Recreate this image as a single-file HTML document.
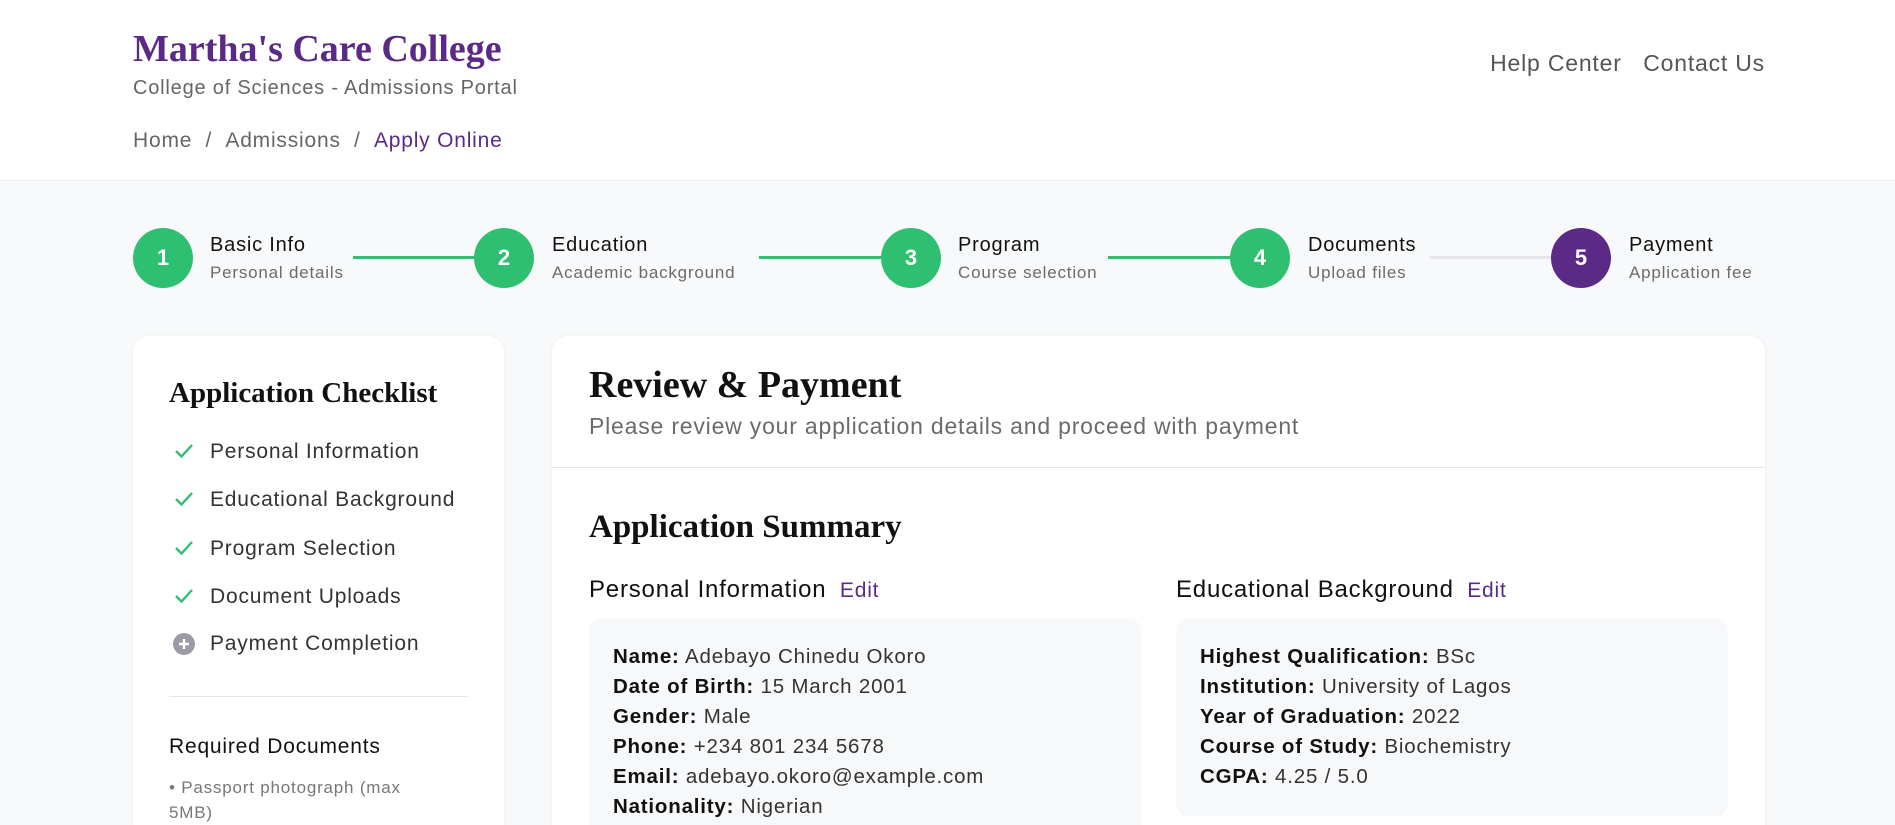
<!DOCTYPE html>
<html style="overflow:hidden;height:825px"><head><meta charset="utf-8"><style>
*{margin:0;padding:0;box-sizing:border-box}
body{width:1895px;height:825px;overflow:hidden;background:#f8f9fa;font-family:"Liberation Sans",sans-serif;color:#1a1a2e;position:relative;letter-spacing:0.05em}
.a{position:absolute;white-space:nowrap}
.serif{font-family:"Liberation Serif","DejaVu Serif",serif;font-weight:bold;letter-spacing:0}
header{position:absolute;left:0;top:0;width:1895px;height:181px;background:#fff;border-bottom:1px solid #ececec}
.circ{position:absolute;top:228px;width:60px;height:60px;border-radius:50%;background:#2fbf71;color:#fff;font-weight:bold;font-size:22px;text-align:center;line-height:60px;letter-spacing:0}
.st{position:absolute;top:234px;font-size:20px;color:#111;white-space:nowrap}
.ss{position:absolute;top:263px;font-size:17px;color:#6b6b6b;white-space:nowrap}
.ln{position:absolute;top:256px;height:3px;background:#2fbf71}
.card{position:absolute;top:336px;background:#fff;border-radius:16px 16px 0 0;box-shadow:0 1px 6px rgba(0,0,0,.05);height:489px}
.ck{position:absolute;left:173px;font-size:21px;color:#333}
.ck svg{position:absolute;left:0;top:0px}
.ck span{position:absolute;left:37px;white-space:nowrap}
.box{position:absolute;top:619px;background:#f7f8fa;border-radius:12px;font-size:20.5px;color:#333;line-height:30px;white-space:nowrap}
.box b{color:#111;font-weight:bold}
</style></head><body>
<header>
<div class="a serif" style="left:133px;top:27px;font-size:38px;color:#5b2a86">Martha's Care College</div>
<div class="a" style="left:133px;top:77px;font-size:20px;color:#666">College of Sciences - Admissions Portal</div>
<div class="a" style="left:133px;top:129px;font-size:21px;color:#666">Home&nbsp; / &nbsp;Admissions&nbsp; / &nbsp;<span style="color:#5b2a86">Apply Online</span></div>
<div class="a" style="right:130px;top:50px;font-size:23px;color:#555">Help Center&nbsp;&nbsp; Contact Us</div>
</header>

<div class="ln" style="left:353px;width:121px"></div>
<div class="ln" style="left:759px;width:122px"></div>
<div class="ln" style="left:1108px;width:122px"></div>
<div class="ln" style="left:1430px;width:121px;background:#e5e5ea"></div>
<div class="circ" style="left:133px">1</div>
<div class="circ" style="left:474px">2</div>
<div class="circ" style="left:881px">3</div>
<div class="circ" style="left:1230px">4</div>
<div class="circ" style="left:1551px;background:#5b2a86">5</div>
<div class="st" style="left:210px">Basic Info</div><div class="ss" style="left:210px">Personal details</div>
<div class="st" style="left:552px">Education</div><div class="ss" style="left:552px">Academic background</div>
<div class="st" style="left:958px">Program</div><div class="ss" style="left:958px">Course selection</div>
<div class="st" style="left:1308px">Documents</div><div class="ss" style="left:1308px">Upload files</div>
<div class="st" style="left:1629px">Payment</div><div class="ss" style="left:1629px">Application fee</div>

<div class="card" style="left:133px;width:371px"></div>
<div class="a serif" style="left:169px;top:377px;font-size:29px;color:#111">Application Checklist</div>
<div class="ck" style="top:440px"><svg width="22" height="22" viewBox="0 0 22 22"><path d="M3 11l5.5 5.5L19 5" stroke="#2fbf71" stroke-width="2.4" fill="none"/></svg><span>Personal Information</span></div>
<div class="ck" style="top:488px"><svg width="22" height="22" viewBox="0 0 22 22"><path d="M3 11l5.5 5.5L19 5" stroke="#2fbf71" stroke-width="2.4" fill="none"/></svg><span>Educational Background</span></div>
<div class="ck" style="top:537px"><svg width="22" height="22" viewBox="0 0 22 22"><path d="M3 11l5.5 5.5L19 5" stroke="#2fbf71" stroke-width="2.4" fill="none"/></svg><span>Program Selection</span></div>
<div class="ck" style="top:585px"><svg width="22" height="22" viewBox="0 0 22 22"><path d="M3 11l5.5 5.5L19 5" stroke="#2fbf71" stroke-width="2.4" fill="none"/></svg><span>Document Uploads</span></div>
<div class="ck" style="top:632px"><svg width="22" height="22" viewBox="0 0 22 22" style="top:1px"><circle cx="11" cy="11" r="11" fill="#9a9aa6"/><path d="M11 6v10M6 11h10" stroke="#fff" stroke-width="2.4"/></svg><span>Payment Completion</span></div>
<div class="a" style="left:169px;top:696px;width:299px;height:1px;background:#e5e5e5"></div>
<div class="a" style="left:169px;top:735px;font-size:21px;color:#111">Required Documents</div>
<div class="a" style="left:169px;top:775px;font-size:17px;color:#777;line-height:25px">• Passport photograph (max<br>5MB)</div>

<div class="card" style="left:552px;width:1213px"></div>
<div class="a serif" style="left:589px;top:363px;font-size:38px;color:#111">Review &amp; Payment</div>
<div class="a" style="left:589px;top:413px;font-size:23px;color:#6b6b6b">Please review your application details and proceed with payment</div>
<div class="a" style="left:552px;top:467px;width:1213px;height:1px;background:#e8e8e8"></div>
<div class="a serif" style="left:589px;top:509px;font-size:33px;color:#111">Application Summary</div>
<div class="a" style="left:589px;top:576px;font-size:24px;color:#111">Personal Information <span style="color:#5b2a86;font-size:21px;margin-left:6px">Edit</span></div>
<div class="a" style="left:1176px;top:576px;font-size:24px;color:#111">Educational Background <span style="color:#5b2a86;font-size:21px;margin-left:6px">Edit</span></div>
<div class="box" style="left:589px;width:552px;height:206px;border-radius:12px 12px 0 0;padding:23px 0 0 24px">
<b>Name:</b> Adebayo Chinedu Okoro<br><b>Date of Birth:</b> 15 March 2001<br><b>Gender:</b> Male<br><b>Phone:</b> +234 801 234 5678<br><b>Email:</b> adebayo.okoro@example.com<br><b>Nationality:</b> Nigerian</div>
<div class="box" style="left:1176px;width:552px;height:197px;padding:23px 0 0 24px">
<b>Highest Qualification:</b> BSc<br><b>Institution:</b> University of Lagos<br><b>Year of Graduation:</b> 2022<br><b>Course of Study:</b> Biochemistry<br><b>CGPA:</b> 4.25 / 5.0</div>
</body></html>
